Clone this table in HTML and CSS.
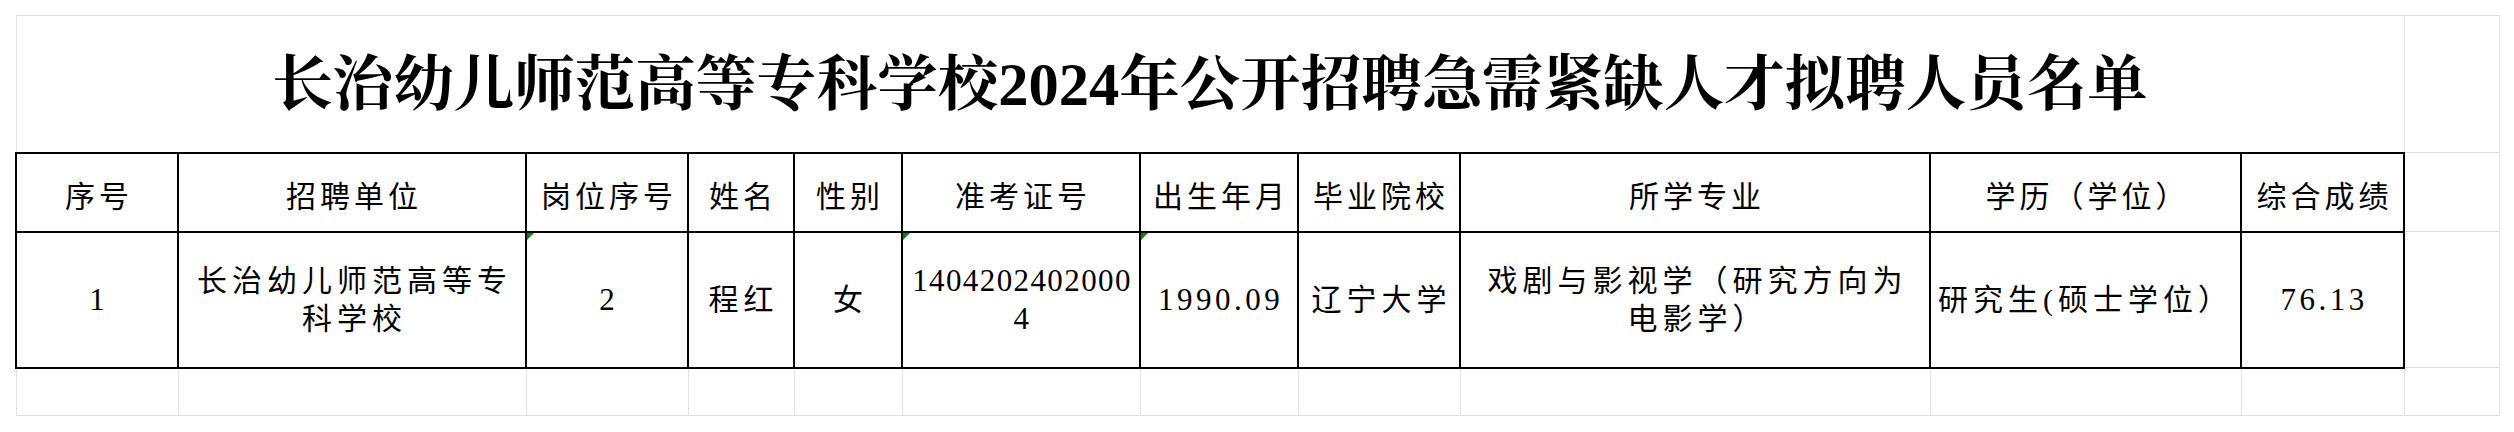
FILE: index.html
```html
<!DOCTYPE html>
<html lang="zh-CN">
<head>
<meta charset="utf-8">
<title>拟聘人员名单</title>
<link rel="stylesheet" href="styles.css">
</head>
<body>
<div class="sheet">
  <table class="grid">
    <colgroup>
      <col class="c1"><col class="c2"><col class="c3"><col class="c4"><col class="c5"><col class="c6">
      <col class="c7"><col class="c8"><col class="c9"><col class="c10"><col class="c11"><col class="c12">
    </colgroup>
    <tr class="r-title">
      <td class="title" colspan="11">长治幼儿师范高等专科学校2024年公开招聘急需紧缺人才拟聘人员名单</td>
      <td class="blank"></td>
    </tr>
    <tr class="r-head">
      <td class="cell head">序号</td>
      <td class="cell head">招聘单位</td>
      <td class="cell head">岗位序号</td>
      <td class="cell head">姓名</td>
      <td class="cell head">性别</td>
      <td class="cell head">准考证号</td>
      <td class="cell head">出生年月</td>
      <td class="cell head">毕业院校</td>
      <td class="cell head">所学专业</td>
      <td class="cell head">学历（学位）</td>
      <td class="cell head">综合成绩</td>
      <td class="blank"></td>
    </tr>
    <tr class="r-data">
      <td class="cell num">1</td>
      <td class="cell text">长治幼儿师范高等专<br>科学校</td>
      <td class="cell num flag">2</td>
      <td class="cell text">程红</td>
      <td class="cell text">女</td>
      <td class="cell num long flag">1404202402000<br>4</td>
      <td class="cell num wide flag">1990.09</td>
      <td class="cell text">辽宁大学</td>
      <td class="cell text">戏剧与影视学（研究方向为<br>电影学）</td>
      <td class="cell text tight">研究生(硕士学位）</td>
      <td class="cell num wide">76.13</td>
      <td class="blank"></td>
    </tr>
    <tr class="r-empty">
      <td class="blank"></td><td class="blank"></td><td class="blank"></td><td class="blank"></td>
      <td class="blank"></td><td class="blank"></td><td class="blank"></td><td class="blank"></td>
      <td class="blank"></td><td class="blank"></td><td class="blank"></td><td class="blank"></td>
    </tr>
  </table>
</div>
</body>
</html>
```
FILE: styles.css
```css
html, body {
  margin: 0;
  padding: 0;
  background: #ffffff;
}

.sheet {
  padding: 15px 0 0 15px;
}

.grid {
  border-collapse: collapse;
  table-layout: fixed;
  width: 2483px;
  color: #000;
  font-family: "Liberation Serif", "Noto Sans CJK SC", serif;
}

.c1 { width: 162px; }
.c2 { width: 348px; }
.c3 { width: 162px; }
.c4 { width: 106px; }
.c5 { width: 108px; }
.c6 { width: 238px; }
.c7 { width: 158px; }
.c8 { width: 162px; }
.c9 { width: 470px; }
.c10 { width: 311px; }
.c11 { width: 163px; }
.c12 { width: 95px; }

.r-title { height: 137px; }
.r-head { height: 79px; }
.r-data { height: 136px; }
.r-empty { height: 48px; }

td {
  padding: 0;
  text-align: center;
  vertical-align: middle;
  white-space: nowrap;
}

.blank {
  border: 1px solid #e2e2e2;
}

.title {
  border: 1px solid #e2e2e2;
  font-family: "Liberation Serif", "Noto Serif CJK SC", "Noto Sans CJK SC", serif;
  font-weight: 700;
  font-size: 60.5px;
  line-height: 1;
  padding-top: 2px;
}

.cell {
  border: 2px solid #000;
  position: relative;
  font-size: 30px;
  font-weight: 400;
}

.head {
  letter-spacing: 4px;
  padding-left: 4px;
  padding-top: 4px;
}

.text {
  letter-spacing: 5px;
  padding-left: 5px;
  line-height: 38px;
}

.text.tight {
  letter-spacing: 5px;
  padding-left: 0;
}

.num {
  font-size: 31px;
  letter-spacing: 2px;
  padding-left: 2px;
  line-height: 38px;
}

.num.long {
  letter-spacing: 1.4px;
}

.num.wide {
  letter-spacing: 3.5px;
  padding-left: 3px;
}

.flag::before {
  content: "";
  position: absolute;
  top: 0;
  left: 0;
  width: 0;
  height: 0;
  border-top: 7px solid #11801f;
  border-right: 7px solid transparent;
}
```
